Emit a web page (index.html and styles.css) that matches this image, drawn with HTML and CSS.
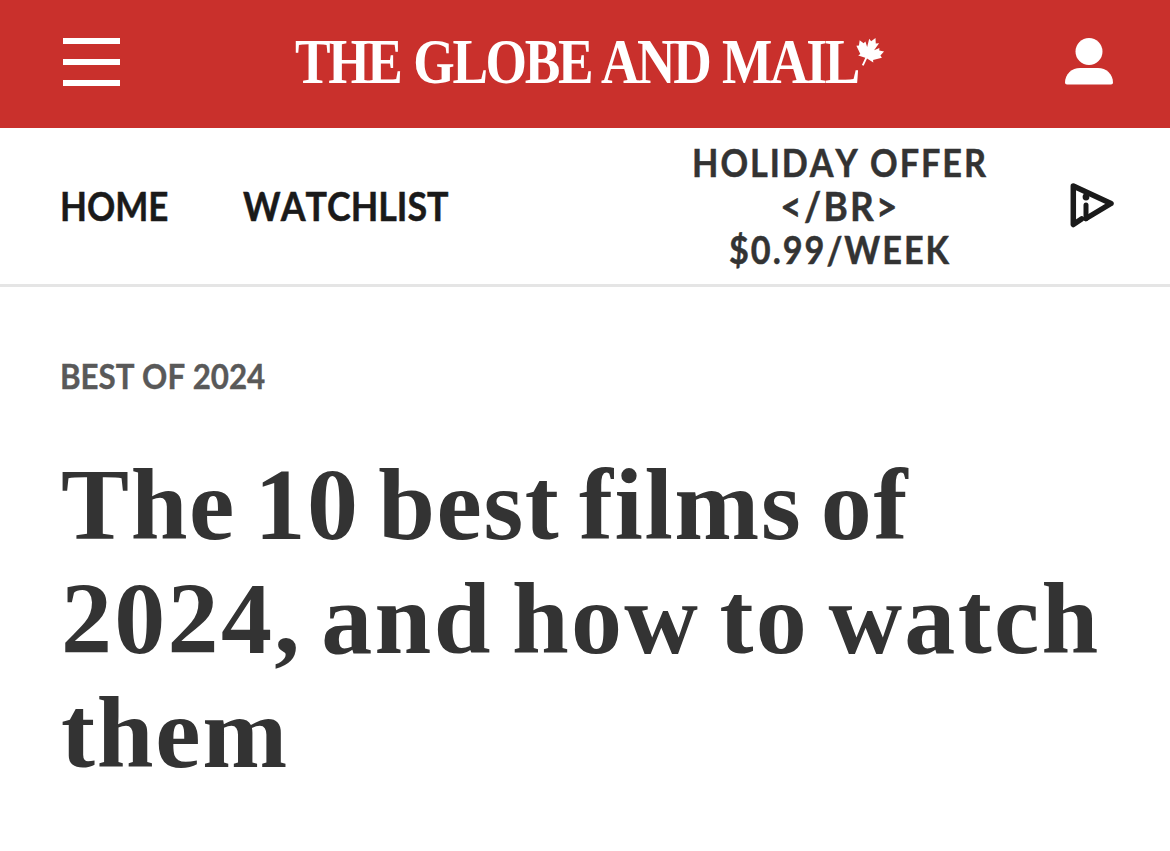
FILE: index.html
```html
<!DOCTYPE html>
<html lang="en">
<head>
<meta charset="utf-8">
<title>The 10 best films of 2024, and how to watch them</title>
<link rel="stylesheet" href="styles.css">
</head>
<body>
<header class="masthead">
  <button class="menu-btn" aria-label="Menu"><span></span><span></span><span></span></button>
  <a class="logo"><span class="logo-text">THE GLOBE AND MAIL</span><svg class="leaf" viewBox="0 0 100 100" aria-hidden="true"><path fill="#fff" transform="rotate(25 50 50)" d="M50 2l8 15 9-5-5 26 12-13 3 7 15-3-5 16 7 4-22 18 4 7-23-3v25h-6V71l-23 3 4-7L6 49l7-4-5-16 15 3 3-7 12 13-5-26 9 5z"/></svg></a>
  <button class="user-btn" aria-label="Account"><svg viewBox="0 0 48 48" width="48" height="48" aria-hidden="true"><circle cx="24" cy="13.500" r="13.500" fill="#fff"/><path fill="#fff" d="M0 44.500C0 36 7 30 15 30h18c8 0 15 6 15 14.500 0 1-.8 2-2 2H2c-1.200 0-2-1-2-2z"/></svg></button>
</header>
<nav class="subnav">
  <a class="nav-link home"><span class="cond">HOME</span></a>
  <a class="nav-link watch"><span class="cond">WATCHLIST</span></a>
  <a class="offer"><span class="offer-text">HOLIDAY OFFER<br><span class="offer-tag">&lt;/BR&gt;</span><br>$0.99/WEEK</span></a>
  <svg class="play-icon" viewBox="0 0 46 48" width="46" height="48" aria-hidden="true"><path fill="none" stroke="#1a1a1a" stroke-width="5.500" stroke-linecap="round" stroke-linejoin="round" d="M13.500 39L5.300 44.500V6L43 23.500 18 38.500"/><path fill="none" stroke="#1a1a1a" stroke-width="5" stroke-linecap="round" d="M18 25V38.500"/><circle cx="18" cy="17" r="3.400" fill="#1a1a1a"/></svg>
</nav>
<main class="article">
  <p class="kicker"><span class="kicker-text">BEST OF 2024</span></p>
  <h1 class="headline"><span class="line line-a">The 10 best films of</span> <span class="line line-b">2024, and how to watch</span> <span class="line">them</span></h1>
</main>
</body>
</html>
```
FILE: styles.css
```css
* { box-sizing: border-box; }
html, body { margin: 0; padding: 0; background: #fff; }
body { width: 1170px; height: 851px; overflow: hidden; font-family: "Lato", sans-serif; font-kerning: none; }
button { background: none; border: 0; padding: 0; display: block; }

.masthead {
  height: 128px;
  background: #c9302c;
  display: flex;
  align-items: center;
  padding: 0 57px 4px 63px;
}
.menu-btn { width: 57px; height: 48px; display: flex; flex-direction: column; justify-content: space-between; }
.menu-btn span { display: block; height: 6px; background: #fff; }
.logo {
  margin-left: 175px;
  display: flex;
  align-items: flex-start;
  color: #fff;
  font-family: "Liberation Serif", serif;
  font-weight: 700;
  font-size: 64px;
  line-height: 64px;
  white-space: nowrap;
}
.logo-text {
  display: block;
  width: 562px;
  letter-spacing: -2.800px;
  word-spacing: 2px;
  font-kerning: normal;
  transform: scaleX(.833);
  transform-origin: left center;
}
.leaf { flex: none; width: 32px; height: 32px; margin: 6px 0 0 -4px; }
.user-btn { margin-left: auto; width: 48px; height: 48px; }

.subnav {
  height: 159px;
  border-bottom: 3px solid #e5e5e5;
  display: flex;
  align-items: center;
  padding: 0 56px 0 60px;
  color: #1a1a1a;
}
.nav-link { font-weight: 700; font-size: 40px; line-height: 48px; white-space: nowrap; -webkit-text-stroke: .5px currentColor; }
.cond { display: block; transform: scaleX(.875); transform-origin: left center; }
.home { width: 109px; margin-right: 74px; }
.watch { width: 206px; }
.watch .cond { transform: scaleX(.895); }
.offer { width: 292px; margin-left: 245px; margin-right: 82px; display: flex; justify-content: center; }
.offer-text {
  flex: none;
  width: 340px;
  text-align: center;
  font-weight: 700;
  font-size: 38px;
  line-height: 43px;
  letter-spacing: 2.200px;
  color: #333;
  -webkit-text-stroke: .5px currentColor;
  transform: scaleX(.9);
}
.offer-tag { font-size: 41px; letter-spacing: 2.500px; }
.play-icon { flex: none; margin-bottom: 4px; }

.article { padding: 67px 61px 0; }
.kicker { margin: 0 0 0 -1px; color: #595959; font-weight: 700; font-size: 34px; line-height: 44px; white-space: nowrap; -webkit-text-stroke: .4px currentColor; }
.kicker-text { display: block; transform: scaleX(.92); transform-origin: left center; }
.headline {
  margin: 50px 0 0;
  color: #333;
  font-family: "Liberation Serif", serif;
  font-weight: 700;
  font-size: 102px;
  line-height: 114px;
  letter-spacing: 1.750px;
  word-spacing: -8.500px;
}
.line { display: block; white-space: nowrap; }
.line-a { letter-spacing: 1.600px; }
.line-b { letter-spacing: 2.300px; }
```
